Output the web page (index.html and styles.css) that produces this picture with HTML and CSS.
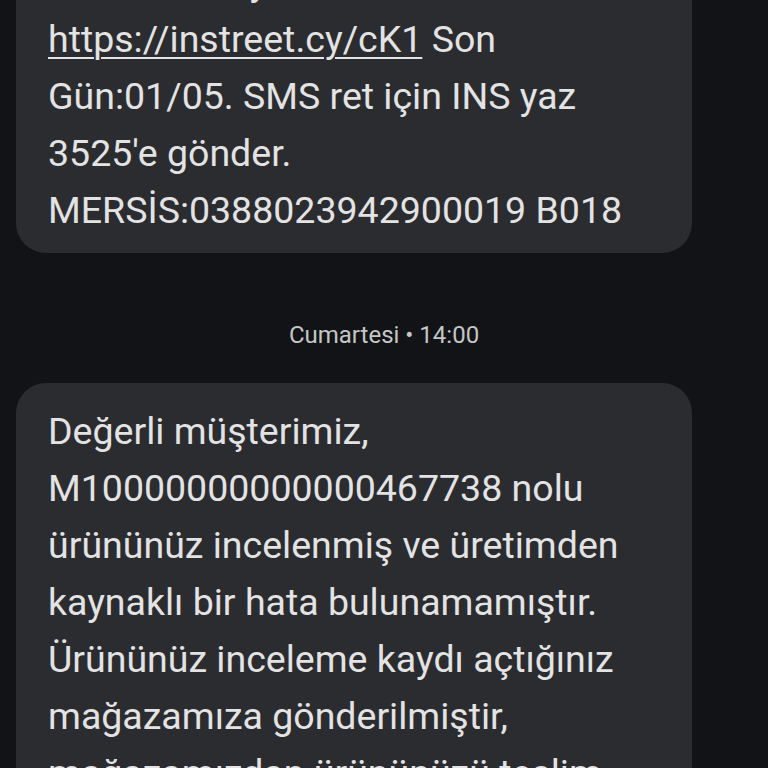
FILE: index.html
```html
<!DOCTYPE html>
<html lang="tr">
<head>
    <meta charset="UTF-8">
    <meta name="viewport" content="width=device-width, initial-scale=1.0">
    <title>Mesajlar</title>
    <link rel="stylesheet" href="styles.css">
</head>
<body>
    <div class="thread">
        <div class="bubble first">
            <p class="text">
                Yılının en büyük indirimleri:<br>
                <a class="link" href="#">https://instreet.cy/cK1</a> Son<br>
                Gün:01/05. SMS ret için INS yaz<br>
                3525'e gönder.<br>
                MERSİS:0388023942900019 B018
            </p>
        </div>

        <div class="stamp">Cumartesi • 14:00</div>

        <div class="bubble">
            <p class="text">
                Değerli müşterimiz,<br>
                M10000000000000467738 nolu<br>
                ürününüz incelenmiş ve üretimden<br>
                kaynaklı bir hata bulunamamıştır.<br>
                Ürününüz inceleme kaydı açtığınız<br>
                mağazamıza gönderilmiştir,<br>
                mağazamızdan ürününüzü teslim<br>
                alabilirsiniz.
            </p>
        </div>
    </div>
</body>
</html>
```

FILE: styles.css
```css
html, body {
    margin: 0;
    padding: 0;
    height: 100%;
    overflow: hidden;
}

body {
    font-family: Roboto, "Noto Sans", sans-serif;
    background-color: #111316;
    color: #e3e3e3;
}

.thread {
    display: flex;
    flex-direction: column;
    padding: 0 76px 0 16px;
    margin-top: -66px;
}

.bubble {
    background-color: #2b2c30;
    border-radius: 30px;
    padding: 20px 32px 14px;
}

.text {
    margin: 0;
    font-size: 37.5px;
    line-height: 57px;
}

.link {
    color: #e3e3e3;
    text-decoration: underline;
    text-decoration-thickness: 2px;
    text-underline-offset: 5px;
}

.stamp {
    text-align: center;
    font-size: 24px;
    color: #c4c7c5;
    padding: 68px 0 0;
    height: 62px;
    margin-left: 60px;
}
```
